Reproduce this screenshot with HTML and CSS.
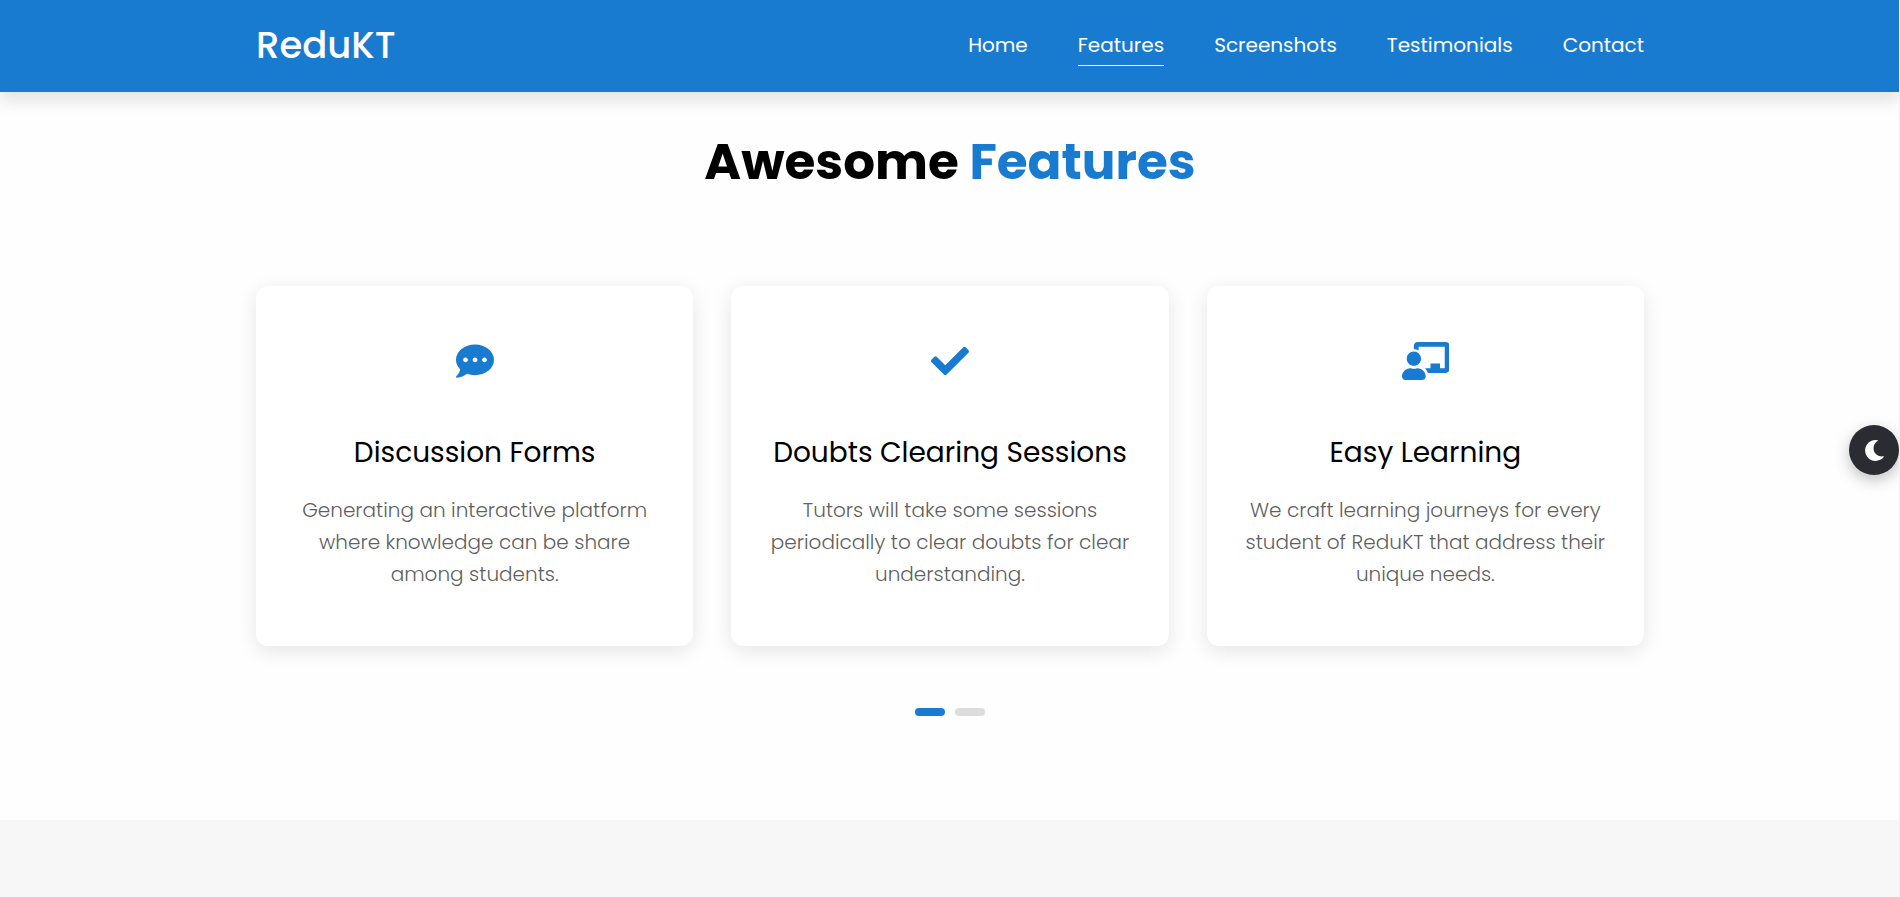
FILE: index.html
```html
<!DOCTYPE html>
<html lang="en">
<head>
<meta charset="utf-8">
<meta name="viewport" content="width=device-width, initial-scale=1">
<title>ReduKT</title>
<link rel="stylesheet" href="styles.css">
</head>
<body>
<header class="header">
  <div class="container header-inner">
    <a class="logo" href="#">ReduKT</a>
    <nav class="nav">
      <a class="nav-link" href="#home">Home</a>
      <a class="nav-link active" href="#features">Features</a>
      <a class="nav-link" href="#screenshots">Screenshots</a>
      <a class="nav-link" href="#testimonials">Testimonials</a>
      <a class="nav-link" href="#contact">Contact</a>
    </nav>
  </div>
</header>
<main>
  <section class="features container" id="features">
    <h2 class="section-title">Awesome <span>Features</span></h2>
    <div class="cards">
      <article class="card">
        <svg class="card-icon" viewBox="0 0 512 512" aria-hidden="true"><path d="M256 32C114.6 32 0 125.1 0 240c0 49.6 21.4 95 57 130.7C44.5 421.1 2.7 466 2.2 466.5c-2.2 2.3-2.8 5.7-1.5 8.7S4.8 480 8 480c66.3 0 116-31.8 140.6-51.4 32.7 12.3 69 19.4 107.4 19.4 141.4 0 256-93.1 256-208S397.4 32 256 32zM128 272c-17.7 0-32-14.3-32-32s14.3-32 32-32 32 14.3 32 32-14.3 32-32 32zm128 0c-17.7 0-32-14.3-32-32s14.3-32 32-32 32 14.3 32 32-14.3 32-32 32zm128 0c-17.7 0-32-14.3-32-32s14.3-32 32-32 32 14.3 32 32-14.3 32-32 32z"/></svg>
        <h3 class="card-title">Discussion Forms</h3>
        <p class="card-text">Generating an interactive platform where knowledge can be share among students.</p>
      </article>
      <article class="card">
        <svg class="card-icon" viewBox="0 0 512 512" aria-hidden="true"><path d="M173.898 439.404l-166.4-166.4c-9.997-9.997-9.997-26.206 0-36.204l36.203-36.204c9.997-9.998 26.207-9.998 36.204 0L192 312.69 432.095 72.596c9.997-9.997 26.207-9.997 36.204 0l36.203 36.204c9.997 9.997 9.997 26.206 0 36.204l-294.4 294.401c-9.998 9.997-26.207 9.997-36.204-.001z"/></svg>
        <h3 class="card-title">Doubts Clearing Sessions</h3>
        <p class="card-text">Tutors will take some sessions periodically to clear doubts for clear understanding.</p>
      </article>
      <article class="card">
        <svg class="card-icon" viewBox="0 0 640 512" aria-hidden="true"><path d="M208 352c-2.39 0-4.78.35-7.06 1.09C187.98 357.3 174.35 360 160 360c-14.37 0-28-2.7-40.95-6.91-2.26-.74-4.64-1.09-7.03-1.09C49.94 352-.33 402.48 0 464.62.14 490.88 21.73 512 48 512h224c26.27 0 47.86-21.12 48-47.38.33-62.14-49.94-112.62-112-112.62zm-48-32c53.02 0 96-42.98 96-96s-42.98-96-96-96-96 42.98-96 96 42.98 96 96 96zM592 0H208c-26.47 0-48 22.25-48 49.59V96c23.42 0 45.1 6.78 64 17.8V64h352v288h-64v-64H384v64h-76.24c19.1 16.69 33.12 38.73 39.69 64H592c26.47 0 48-22.25 48-49.59V49.59C640 22.25 618.47 0 592 0z"/></svg>
        <h3 class="card-title">Easy Learning</h3>
        <p class="card-text">We craft learning journeys for every student of ReduKT that address their unique needs.</p>
      </article>
    </div>
    <div class="dots">
      <button class="dot selected" type="button" aria-label="Slide 1"></button>
      <button class="dot" type="button" aria-label="Slide 2"></button>
    </div>
  </section>
  <section class="screenshots" id="screenshots"></section>
</main>
<button class="theme-toggle" type="button" aria-label="Dark mode">
  <svg viewBox="0 0 512 512" aria-hidden="true"><path d="M283.211 512c78.962 0 151.079-35.925 198.857-94.792 7.068-8.708-.639-21.43-11.562-19.35-124.203 23.654-238.262-71.576-238.262-196.954 0-72.222 38.662-138.635 101.498-174.394 9.686-5.512 7.25-20.197-3.756-22.23A258.156 258.156 0 0 0 283.211 0c-141.309 0-256 114.511-256 256 0 141.309 114.511 256 256 256z"/></svg>
</button>
</body>
</html>
```
FILE: styles.css
```css
:root {
  --main: #197bd0;
}

* {
  box-sizing: border-box;
  margin: 0;
  padding: 0;
}

body {
  display: flex;
  flex-direction: column;
  height: 100vh;
  overflow: hidden;
  background: #fefefe;
  color: #000;
  font-family: Poppins, Inter, "Open Sans", sans-serif;
}

body::after {
  content: "";
  position: fixed;
  top: 0;
  right: 0;
  bottom: 0;
  width: 1px;
  background: #f1f1f1;
}

main {
  display: flex;
  flex: 1;
  flex-direction: column;
}

.container {
  padding-right: 256px;
  padding-left: 256px;
}

.header {
  position: relative;
  background: var(--main);
  box-shadow: 0 10px 15px rgba(0, 0, 0, 0.1);
}

.header-inner {
  display: flex;
  align-items: center;
  justify-content: space-between;
  height: 92px;
  padding-bottom: 2px;
}

.logo {
  color: #fff;
  font-size: 37px;
  font-weight: 500;
  text-decoration: none;
}

.nav {
  display: flex;
  gap: 50px;
}

.nav-link {
  padding: 4px 0;
  border-bottom: 1px solid transparent;
  color: #fff;
  font-size: 20px;
  font-weight: 400;
  line-height: 32px;
  text-decoration: none;
}

.nav-link.active {
  border-color: #fff;
}

.features {
  padding-bottom: 104px;
}

.section-title {
  padding: 32px 0 86px;
  font-size: 50px;
  font-weight: 700;
  line-height: 76px;
  text-align: center;
}

.section-title span {
  color: var(--main);
}

.cards {
  display: grid;
  grid-template-columns: repeat(3, 1fr);
  gap: 38px;
}

.card {
  display: flex;
  flex-direction: column;
  align-items: center;
  padding: 56px 32px;
  border-radius: 12px;
  background: #fff;
  box-shadow: 0 5px 20px rgba(0, 0, 0, 0.1);
  text-align: center;
}

.card-icon {
  height: 38px;
  fill: var(--main);
}

.card-title {
  margin: 51px 0 19px;
  font-size: 28px;
  font-weight: 400;
  line-height: 44px;
}

.card-text {
  color: #5f5f5f;
  font-size: 20px;
  font-weight: 300;
  line-height: 32px;
}

.dots {
  display: flex;
  justify-content: center;
  gap: 10px;
  margin-top: 62px;
}

.dot {
  width: 30px;
  height: 8px;
  border: 0;
  border-radius: 4px;
  background: #ddd;
}

.dot.selected {
  background: var(--main);
}

.screenshots {
  flex: 1;
  background: #f7f7f7;
}

.theme-toggle {
  position: fixed;
  top: 425px;
  right: 1px;
  display: grid;
  place-items: center;
  width: 50px;
  height: 50px;
  border: 0;
  border-radius: 50%;
  background: #2b2c31;
  box-shadow: 0 5px 15px rgba(0, 0, 0, 0.25);
}

.theme-toggle svg {
  width: 21px;
  fill: #fff;
}

@media (max-width: 1200px) {
  .container {
    padding-right: 32px;
    padding-left: 32px;
  }
}
```
